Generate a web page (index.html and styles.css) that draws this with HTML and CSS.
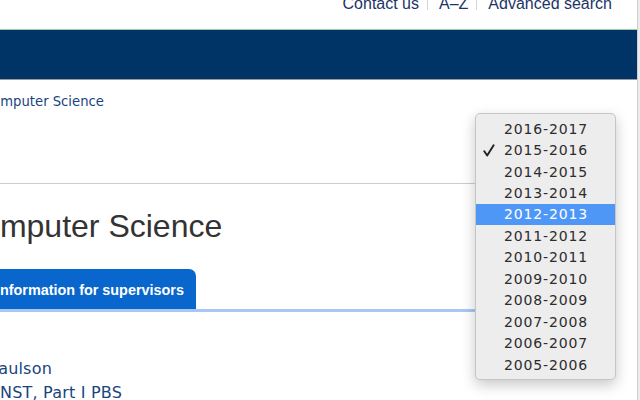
FILE: index.html
```html
<!DOCTYPE html>
<html lang="en">
<head>
<meta charset="utf-8">
<title>Computer Science</title>
<link rel="stylesheet" href="styles.css">
</head>
<body>
<div class="window">
  <div class="page">
    <div class="topbar">
      <nav class="toplinks">
        <a class="toplink" href="#">Contact us</a>
        <span class="sep"></span>
        <a class="toplink" href="#">A–Z</a>
        <span class="sep"></span>
        <a class="toplink" href="#">Advanced search</a>
      </nav>
    </div>
    <div class="navband"></div>
    <div class="crumb"><a href="#" class="crumb-link">Computer Science</a></div>
    <h1 class="title">Computer Science</h1>
    <div class="tabs">
      <a class="tab" href="#">Information for supervisors</a>
    </div>
    <div class="people">
      <div class="person first">Paulson</div>
      <div class="person">NST, Part I PBS</div>
    </div>

    <ul class="menu">
      <li class="item"><span class="check"></span>2016-2017</li>
      <li class="item"><span class="check"><svg class="check-icon" width="12" height="13" viewBox="0 0 12 13"><path d="M1.3 7.2 L4.2 11.6 L10.6 1.2" fill="none" stroke="#222" stroke-width="1.9" stroke-linecap="round" stroke-linejoin="round"/></svg></span>2015-2016</li>
      <li class="item"><span class="check"></span>2014-2015</li>
      <li class="item"><span class="check"></span>2013-2014</li>
      <li class="item selected"><span class="check"></span>2012-2013</li>
      <li class="item"><span class="check"></span>2011-2012</li>
      <li class="item"><span class="check"></span>2010-2011</li>
      <li class="item"><span class="check"></span>2009-2010</li>
      <li class="item"><span class="check"></span>2008-2009</li>
      <li class="item"><span class="check"></span>2007-2008</li>
      <li class="item"><span class="check"></span>2006-2007</li>
      <li class="item"><span class="check"></span>2005-2006</li>
    </ul>
  </div>
  <div class="scrollbar"></div>
</div>
</body>
</html>
```

FILE: styles.css
```css
* { box-sizing: border-box; }
html, body {
  margin: 0;
  padding: 0;
  background: #fff;
}
.window {
  display: flex;
  width: 640px;
  height: 400px;
  overflow: hidden;
}
.page {
  position: relative;
  flex: 1;
  overflow: hidden;
  height: 400px;
}
.scrollbar {
  width: 3px;
  height: 400px;
  background: #ececec;
  border-left: 1px solid #cfcfcf;
}
.topbar {
  height: 30px;
  border-bottom: 1px solid #9fd09a;
  display: flex;
  justify-content: flex-end;
  align-items: flex-start;
  padding-right: 25px;
  overflow: hidden;
}
.toplinks {
  display: flex;
  align-items: flex-start;
  margin-top: -5px;
  font-family: "Liberation Sans", Arial, sans-serif;
  font-size: 16px;
  line-height: 18px;
}
.toplink {
  color: #1c3566;
  text-decoration: none;
}
.sep {
  width: 1px;
  height: 15px;
  background: #d4d4d4;
  margin: 0 11px 0 8px;
}
.navband {
  height: 50px;
  background: #013466;
  border-bottom: 1px solid #9a9a9a;
}
.crumb {
  height: 104px;
  padding-top: 14px;
  border-bottom: 1px solid #cccccc;
  font-family: "DejaVu Sans", Verdana, sans-serif;
  font-size: 13.2px;
  line-height: 16px;
  width: 600px;
}
.crumb-link {
  color: #17457e;
  text-decoration: none;
  margin-left: -17px;
}
.title {
  margin: 24px 0 0 -41px;
  font-family: "Liberation Sans", Arial, sans-serif;
  font-weight: normal;
  font-size: 32px;
  line-height: 37px;
  color: #333333;
}
.tabs {
  margin-top: 24px;
  width: 600px;
  border-bottom: 3px solid #a9c7f6;
  display: flex;
}
.tab {
  display: block;
  height: 40px;
  margin-left: -18px;
  padding: 0 12px 0 14px;
  background: #0866cc;
  border-radius: 0 7px 0 0;
  color: #fff;
  text-decoration: none;
  font-family: "Liberation Sans", Arial, sans-serif;
  font-weight: bold;
  font-size: 14.4px;
  line-height: 43px;
}
.people {
  margin-top: 45px;
  font-family: "DejaVu Sans", Verdana, sans-serif;
  font-size: 16px;
  line-height: 24px;
  letter-spacing: 0.2px;
  color: #17457e;
}
.person.first {
  text-indent: -11px;
}
.menu {
  position: absolute;
  left: 475px;
  top: 113px;
  width: 141px;
  margin: 0;
  padding: 4px 0;
  list-style: none;
  background: #ededed;
  border: 1px solid #c6c6c6;
  border-radius: 5px;
  box-shadow: 0 5px 14px rgba(0, 0, 0, 0.22);
  font-family: "DejaVu Sans", "Lucida Grande", sans-serif;
  font-size: 14px;
  color: #2c2c2c;
}
.item {
  display: flex;
  align-items: center;
  height: 21.45px;
  letter-spacing: 0.85px;
}
.item.selected {
  background: #4f97f7;
  color: #ffffff;
}
.check {
  display: flex;
  align-items: center;
  width: 28px;
  padding-left: 7px;
}
.check-icon {
  display: block;
}
```
